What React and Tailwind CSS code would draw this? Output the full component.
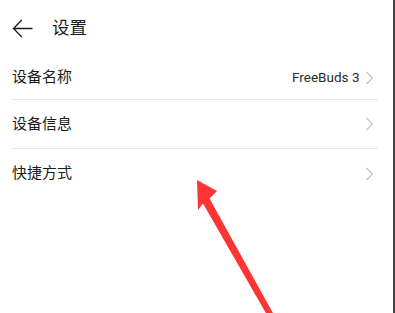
import React from "react";

function Chevron() {
  return (
    <svg width="9" height="14" viewBox="0 0 9 14" fill="none" className="shrink-0">
      <path d="M1.5 1l6 6-6 6" stroke="#c4c4c4" strokeWidth="1.2" />
    </svg>
  );
}

function Row({ label, value, className }) {
  return (
    <div className={`flex items-center justify-between pl-[12px] pr-[19px] ${className}`}>
      <span className="text-[15px] text-[#1c1c1c]">{label}</span>
      <div className="flex items-center gap-[5px]">
        {value && <span className="text-[13.5px] text-[#2a2a2a]">{value}</span>}
        <Chevron />
      </div>
    </div>
  );
}

export default function App() {
  return (
    <div
      className="relative flex w-[395px] h-[313px] overflow-hidden bg-white"
      style={{ fontFamily: 'Roboto, "Noto Sans CJK SC", sans-serif' }}
    >
      <div className="flex-1 flex flex-col">
        <div className="flex items-center h-[56px] pl-[12px]">
          <svg width="21" height="19" viewBox="0 0 21 19" fill="none">
            <path d="M20.5 9.5H1.5M9.8 1L1.5 9.5l8.3 8.5" stroke="#1c1c1c" strokeWidth="1.3" />
          </svg>
          <span className="ml-[19px] text-[17.5px] text-[#1c1c1c]">设置</span>
        </div>
        <Row label="设备名称" value="FreeBuds 3" className="h-[43px]" />
        <div className="ml-[11px] mr-[15px] h-px bg-[#e8e8e8]" />
        <Row label="设备信息" className="h-[48px]" />
        <div className="ml-[11px] mr-[15px] h-px bg-[#e8e8e8]" />
        <Row label="快捷方式" className="h-[49px]" />
      </div>
      <div className="w-[2.5px] bg-[#454545]" />
      <svg className="absolute left-0 top-0 pointer-events-none" width="395" height="313" viewBox="0 0 395 313">
        <polygon
          points="197,180 217,191 209.5,198.5 274,315 267,315 203,203.5 198,210"
          fill="#ff3535"
        />
      </svg>
    </div>
  );
}
